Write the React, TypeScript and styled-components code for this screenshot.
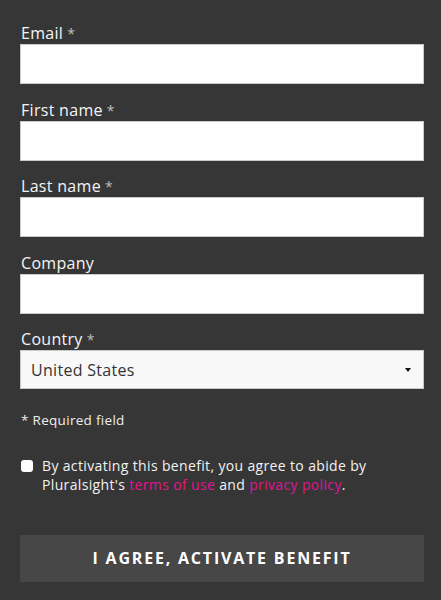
import React, { useState } from 'react';
import styled, { createGlobalStyle } from 'styled-components';

const GlobalStyle = createGlobalStyle`
    html, body {
        margin: 0;
        padding: 0;
        background: #363636;
    }
    body {
        font-family: "Open Sans", "Liberation Sans", sans-serif;
        color: #ffffff;
    }
`;

const Page = styled.div`
    width: 441px;
    min-height: 600px;
    box-sizing: border-box;
    padding: 22px 17px 0 20px;
    background: #363636;
`;

const Form = styled.form`
    display: flex;
    flex-direction: column;
`;

const Field = styled.div`
    display: flex;
    flex-direction: column;
    margin-bottom: 14.5px;
`;

const Label = styled.label`
    display: block;
    height: 22px;
    font-size: 16px;
    line-height: 22px;
    letter-spacing: 0.3px;
    padding-left: 1px;
    color: #f4f4f4;
`;

const Star = styled.span`
    color: #bdbdbd;
    font-size: 14px;
    line-height: 0;
    margin-left: 4px;
`;

const InputBox = styled.input`
    height: 40px;
    box-sizing: border-box;
    border: 1px solid #c9c9c9;
    background: #ffffff;
    padding: 0 10px;
    font-size: 16px;
    font-family: inherit;
    outline: none;
`;

const SelectWrap = styled.div`
    position: relative;
    height: 39px;
    box-sizing: border-box;
    border: 1px solid #c9c9c9;
    background: #f8f8f8;
    display: flex;
    align-items: center;
    padding: 0 10px;
    font-size: 16px;
    letter-spacing: 0.3px;
    color: #333333;
`;

const Caret = styled.span`
    position: absolute;
    right: 12px;
    top: 50%;
    margin-top: -2px;
    width: 0;
    height: 0;
    border-left: 3.5px solid transparent;
    border-right: 3.5px solid transparent;
    border-top: 4px solid #111111;
`;

const Required = styled.p`
    margin: 7px 0 0 1px;
    font-size: 13.5px;
    letter-spacing: 0.3px;
    color: #eeeeee;
`;

const AgreeRow = styled.div`
    display: flex;
    align-items: flex-start;
    gap: 9px;
    margin-top: 27px;
    font-size: 14px;
    line-height: 19px;
    letter-spacing: 0.35px;
    color: #f2f2f2;
`;

const AgreeText = styled.div`
    display: flex;
    flex-direction: column;
`;

const Line = styled.div`
    display: flex;
    white-space: pre;
`;

const Check = styled.span<{ $on: boolean }>`
    flex: none;
    width: 12px;
    height: 12px;
    margin-top: 4px;
    margin-left: 1px;
    border-radius: 3px;
    background: ${p => (p.$on ? '#e80a89' : '#ffffff')};
    cursor: pointer;
`;

const Link = styled.a`
    color: #e0158f;
    text-decoration: none;
`;

const SubmitButton = styled.button`
    margin-top: 41px;
    height: 47px;
    border: none;
    background: #474747;
    color: #ffffff;
    font-family: inherit;
    font-size: 16px;
    font-weight: 700;
    letter-spacing: 1.8px;
    text-transform: uppercase;
    cursor: pointer;
`;

const fields = [
    { id: 'email', label: 'Email', required: true },
    { id: 'first', label: 'First name', required: true },
    { id: 'last', label: 'Last name', required: true },
    { id: 'company', label: 'Company', required: false },
];

const App: React.FC = () => {
    const [agreed, setAgreed] = useState(false);

    return (
        <>
            <GlobalStyle />
            <Page>
                <Form onSubmit={e => e.preventDefault()}>
                    {fields.map(f => (
                        <Field key={f.id}>
                            <Label htmlFor={f.id}>
                                {f.label}
                                {f.required && <Star>*</Star>}
                            </Label>
                            <InputBox type="text" id={f.id} />
                        </Field>
                    ))}
                    <Field>
                        <Label>
                            Country<Star>*</Star>
                        </Label>
                        <SelectWrap>
                            United States
                            <Caret />
                        </SelectWrap>
                    </Field>
                    <Required>* Required field</Required>
                    <AgreeRow>
                        <Check $on={agreed} onClick={() => setAgreed(a => !a)} />
                        <AgreeText>
                            <Line>By activating this benefit, you agree to abide by</Line>
                            <Line>
                                <span>Pluralsight's </span>
                                <Link href="#">terms of use</Link>
                                <span> and </span>
                                <Link href="#">privacy policy</Link>
                                <span>.</span>
                            </Line>
                        </AgreeText>
                    </AgreeRow>
                    <SubmitButton type="submit">I agree, activate benefit</SubmitButton>
                </Form>
            </Page>
        </>
    );
};

export default App;
